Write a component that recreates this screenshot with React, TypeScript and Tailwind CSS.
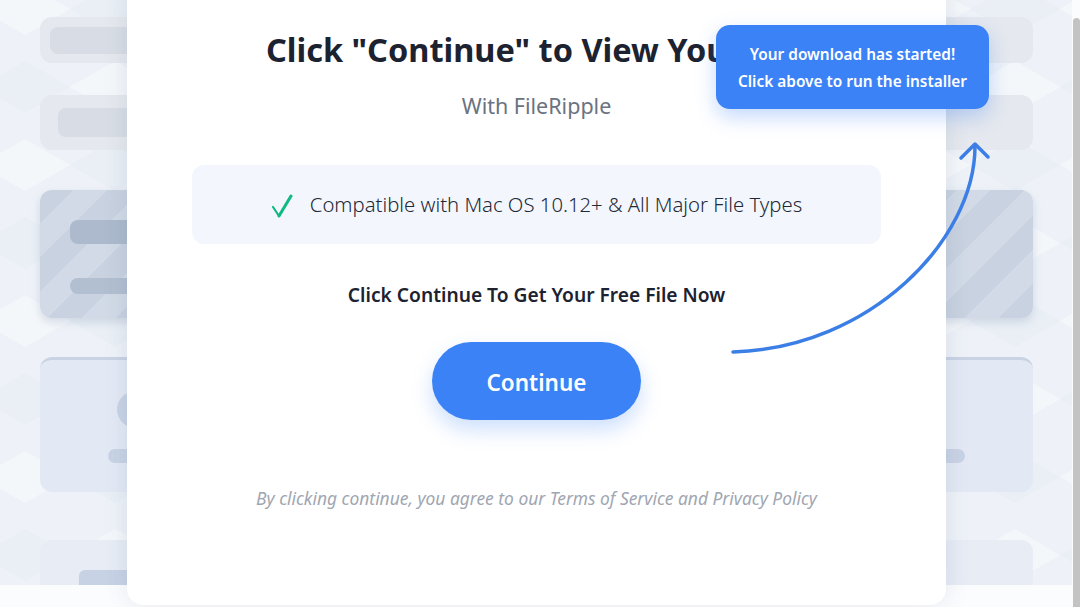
import React from "react";

const font = { fontFamily: '"Noto Sans", "Open Sans", sans-serif' };

function HexPattern() {
  return (
    <svg className="absolute inset-0 h-full w-full" width="1072" height="585">
      <defs>
        <pattern id="hex" width="180" height="156" patternUnits="userSpaceOnUse" x="-20" y="-30">
          <polygon points="0,39 45,13 90,39 45,65" fill="#ffffff" opacity="0.35" />
          <polygon points="90,117 135,91 180,117 135,143" fill="#ffffff" opacity="0.35" />
          <polygon points="90,39 135,13 180,39 135,65" fill="#dfe6f1" opacity="0.35" />
          <polygon points="0,117 45,91 90,117 45,143" fill="#dfe6f1" opacity="0.35" />
        </pattern>
      </defs>
      <rect width="100%" height="100%" fill="url(#hex)" />
    </svg>
  );
}

export default function App() {
  return (
    <div className="relative h-[607px] w-[1080px] overflow-hidden bg-[#fbfcfe]" style={font}>
      {/* background page */}
      <div className="relative h-[585px] w-[1072px] overflow-hidden bg-[#eef2f8]">
        <HexPattern />
        <div className="relative flex flex-col pl-[40px] pr-[39px] pt-[17px]">
          <div className="flex h-[46px] items-center rounded-xl bg-[#e5e8ee] pl-[10px]">
            <div className="h-[27px] w-[600px] rounded-lg bg-[#d8dde5]" />
          </div>
          <div className="mt-[32px] flex h-[55px] items-center rounded-xl bg-[#e5e8ee] pl-[18px]">
            <div className="h-[29px] w-[600px] rounded-lg bg-[#d8dde5]" />
          </div>
          <div className="mt-[40px] flex h-[128px] flex-col rounded-xl bg-[repeating-linear-gradient(135deg,#c8d2e0_0px,#c8d2e0_24px,#d1dae6_24px,#d1dae6_48px)] pl-[30px] pt-[30px] shadow-[0_4px_8px_rgba(120,140,170,0.25)]">
            <div className="h-[24px] w-[700px] rounded-lg bg-[#adbacd]" />
            <div className="mt-[34px] h-[16px] w-[700px] rounded-lg bg-[#b2bfd1]" />
          </div>
          <div className="mt-[39px] flex h-[135px] flex-col rounded-xl border-t-[3px] border-[#c9d3e3] bg-[#e3e9f4] pl-[68px] pt-[31px]">
            <div className="ml-[9px] h-[37px] w-[37px] rounded-full bg-[#c8d3e5]" />
            <div className="mt-[21px] h-[14px] w-[857px] rounded-full bg-[#c9d3e5]" />
          </div>
          <div className="mt-[48px] flex h-[60px] flex-col rounded-xl bg-[#e7ecf5] pl-[39px] pt-[30px]">
            <div className="h-[20px] w-[700px] rounded-md bg-[#c7d2e5]" />
          </div>
        </div>
      </div>

      {/* scrollbar */}
      <div className="absolute right-0 top-[18px] h-[589px] w-[7px] rounded-t bg-[#c3c3c3]" />

      {/* modal */}
      <div className="absolute left-[127px] top-[-20px] flex h-[625px] w-[819px] flex-col items-center rounded-2xl bg-white pt-[49px] shadow-[0_0_24px_rgba(60,80,120,0.12)]">
        <h1 className="whitespace-nowrap text-[32.5px] font-bold leading-[42px] text-[#1c2230]">
          Click "Continue" to View Your File
        </h1>
        <p className="mt-[21px] text-[21.5px] leading-[28px] text-[#6b7280]">With FileRipple</p>
        <div className="mt-[45px] flex h-[79px] w-[689px] items-center justify-center gap-[17px] rounded-xl bg-[#f3f7fd]">
          <svg width="22" height="24" viewBox="0 0 22 24" className="mt-[2px]">
            <path d="M2 13 L8 22" fill="none" stroke="#10b981" strokeWidth="2.2" strokeLinecap="round" />
            <path d="M8 22 L20 2" fill="none" stroke="#10b981" strokeWidth="3" strokeLinecap="round" />
          </svg>
          <span className="text-[20.3px] font-light text-[#1f2937]">Compatible with Mac OS 10.12+ &amp; All Major File Types</span>
        </div>
        <p className="mt-[37px] text-[19.2px] font-semibold leading-[28px] text-[#1c2230]">
          Click Continue To Get Your Free File Now
        </p>
        <button className="mt-[33px] flex h-[78px] w-[209px] items-center justify-center rounded-full bg-[#3b82f6] pt-[3px] text-[22.5px] font-semibold text-white shadow-[0_10px_20px_rgba(59,130,246,0.25)]">
          Continue
        </button>
        <p className="mt-[66px] text-[17.4px] italic leading-[24px] text-[#a0a6b1]">
          By clicking continue, you agree to our Terms of Service and Privacy Policy
        </p>
      </div>

      {/* tooltip */}
      <div className="absolute left-[716px] top-[25px] flex h-[84px] w-[273px] flex-col items-center justify-center gap-[5px] rounded-[14px] bg-[#3b82f6] pt-[2px] text-[15.4px] font-semibold leading-[22px] text-white shadow-[0_8px_20px_rgba(59,130,246,0.3)]">
        <span>Your download has started!</span>
        <span>Click above to run the installer</span>
      </div>

      {/* arrow */}
      <svg className="pointer-events-none absolute left-0 top-0" width="1080" height="607">
        <path d="M733 352 C 870 348 975 240 975 146" fill="none" stroke="#3b7fe6" strokeWidth="3.5" strokeLinecap="round" />
        <path d="M961 158 L975 144 L988 157" fill="none" stroke="#3b7fe6" strokeWidth="3.5" strokeLinecap="round" strokeLinejoin="round" />
      </svg>
    </div>
  );
}
